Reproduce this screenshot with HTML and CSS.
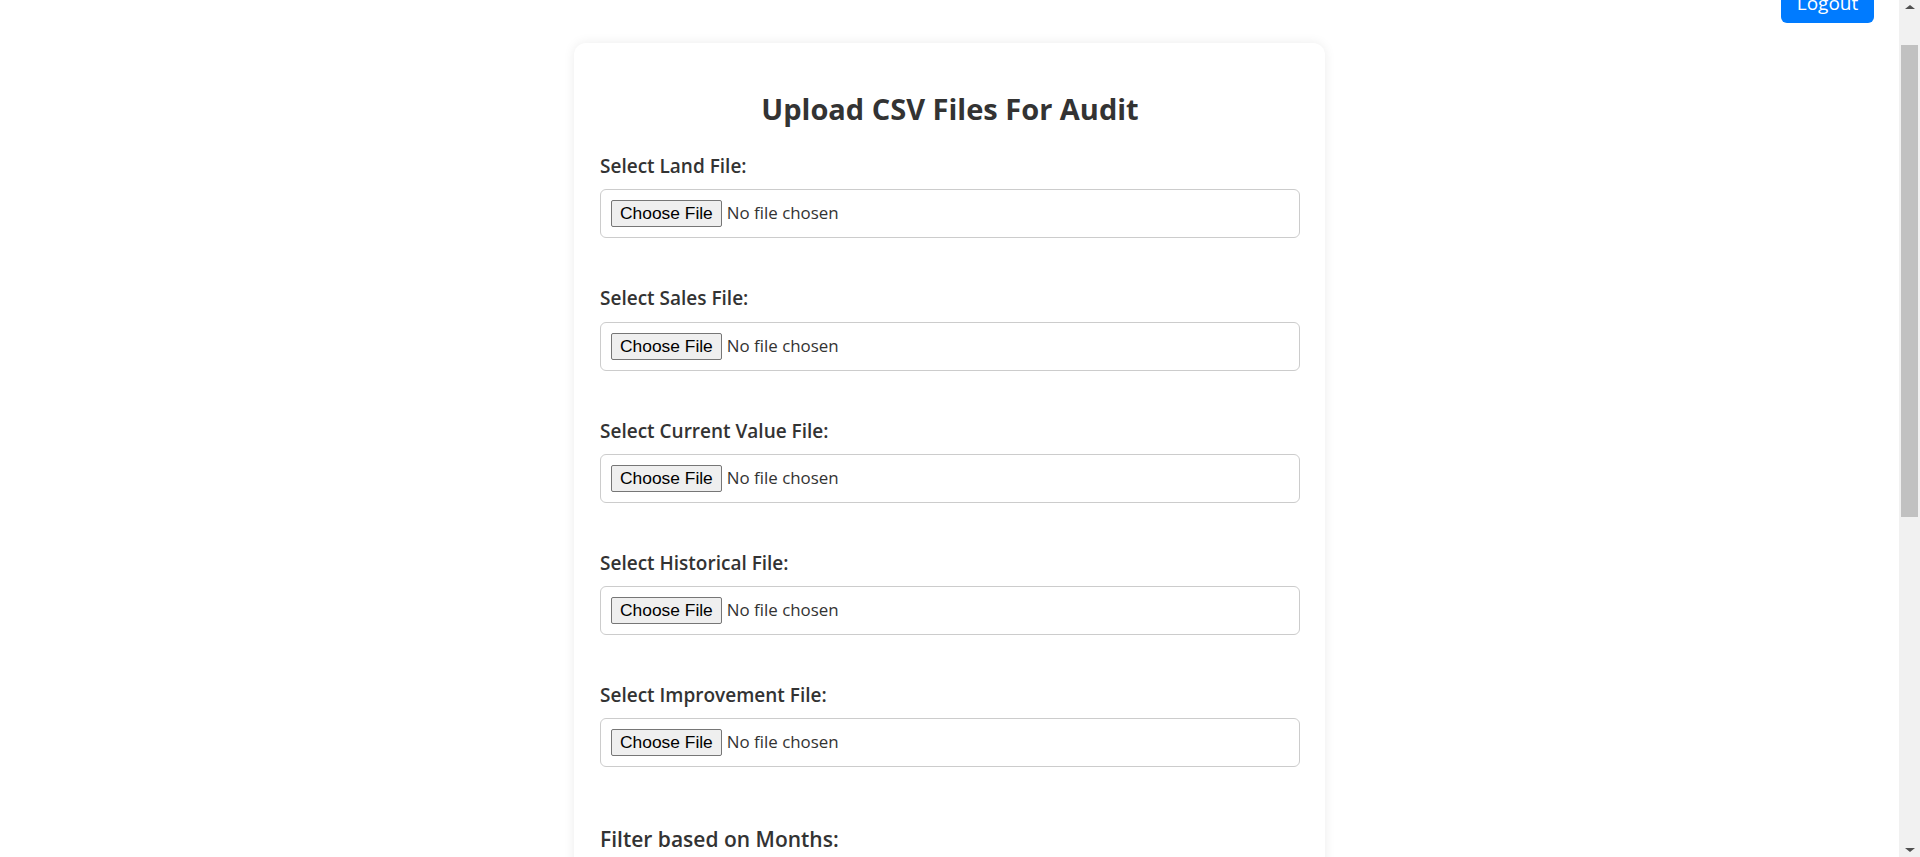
FILE: index.html
```html
<!DOCTYPE html>
<html lang="en">
<head>
<meta charset="utf-8">
<title>Upload CSV Files For Audit</title>
<link rel="stylesheet" href="styles.css">
</head>
<body>
<header class="topbar">
  <button class="logout" type="button">Logout</button>
</header>
<main class="card">
  <h2 class="title">Upload CSV Files For Audit</h2>
  <form class="upload-form">
    <div class="field">
      <label class="field-label" for="land">Select Land File:</label>
      <div class="file-box"><input id="land" class="file-input" type="file" accept=".csv"></div>
    </div>
    <div class="field">
      <label class="field-label" for="sales">Select Sales File:</label>
      <div class="file-box"><input id="sales" class="file-input" type="file" accept=".csv"></div>
    </div>
    <div class="field">
      <label class="field-label" for="current">Select Current Value File:</label>
      <div class="file-box"><input id="current" class="file-input" type="file" accept=".csv"></div>
    </div>
    <div class="field">
      <label class="field-label" for="historical">Select Historical File:</label>
      <div class="file-box"><input id="historical" class="file-input" type="file" accept=".csv"></div>
    </div>
    <div class="field last">
      <label class="field-label" for="improvement">Select Improvement File:</label>
      <div class="file-box"><input id="improvement" class="file-input" type="file" accept=".csv"></div>
    </div>
    <section class="months">
      <h3 class="months-title">Filter based on Months:</h3>
      <div class="field">
        <label class="field-label" for="from">From Month:</label>
        <div class="file-box"><input id="from" class="select" type="month"></div>
      </div>
      <div class="field">
        <label class="field-label" for="to">To Month:</label>
        <div class="file-box"><input id="to" class="select" type="month"></div>
      </div>
      <button class="submit" type="submit">Upload and Audit</button>
    </section>
  </form>
</main>
<div class="scrollbar" aria-hidden="true">
  <span class="sb-arrow sb-up"></span>
  <span class="sb-thumb"></span>
  <span class="sb-arrow sb-down"></span>
</div>
<script src="script.js"></script>
</body>
</html>
```

FILE: styles.css
```css
html, body {
  margin: 0;
  padding: 0;
  background: #ffffff;
}
body {
  font-family: "Open Sans", "Noto Sans", sans-serif;
  color: #333333;
  margin-right: 21px;
}
.topbar {
  display: flex;
  justify-content: flex-end;
  padding: 27px 25px 0 0;
  height: 40px;
}
.logout {
  background: #007bff;
  color: #ffffff;
  border: none;
  border-radius: 6px;
  font-family: "Open Sans", sans-serif;
  font-size: 19px;
  width: 93px;
  height: 40px;
  padding: 0;
}
.card {
  box-sizing: border-box;
  width: 751px;
  margin: 20px auto 60px;
  padding: 27px 25px 40px 26px;
  background: #ffffff;
  border-radius: 12px;
  box-shadow: 0 0 12px rgba(0, 0, 0, 0.08);
}
.title {
  margin: 20.5px 0 27.5px;
  text-align: center;
  font-size: 29px;
  font-weight: 700;
  line-height: 36px;
}
.field {
  display: flex;
  flex-direction: column;
  margin-bottom: 48px;
}
.field.last {
  margin-bottom: 57.5px;
}
.field-label {
  font-size: 19px;
  font-weight: 600;
  line-height: 24px;
  margin-bottom: 11.3px;
}
.file-box {
  border: 1px solid #cccccc;
  border-radius: 6px;
  padding: 10px;
}
.file-input {
  display: block;
  font-family: "Open Sans", sans-serif;
  font-size: 16.9px;
  color: #333333;
  height: 27px;
}
.file-input::file-selector-button {
  font-family: "Liberation Sans", Arial, sans-serif;
  font-size: 17.4px;
  height: 27px;
  padding: 0 8px;
  margin-right: 5px;
  border: 1px solid #767676;
  border-radius: 2px;
  background: #efefef;
  color: #000000;
}
.months-title {
  margin: 0 0 20px;
  font-size: 21px;
  font-weight: 600;
  line-height: 28px;
}
.select {
  box-sizing: border-box;
  font-family: "Open Sans", sans-serif;
  font-size: 17px;
  color: #333333;
  border: none;
  width: 100%;
  height: 27px;
}
.submit {
  display: block;
  width: 100%;
  height: 49px;
  background: #007bff;
  color: #ffffff;
  border: none;
  border-radius: 6px;
  font-family: "Open Sans", sans-serif;
  font-size: 19px;
}
.scrollbar {
  position: fixed;
  top: 0;
  right: 0;
  width: 21px;
  height: 100vh;
  background: #f1f1f1;
}
.sb-thumb {
  position: absolute;
  top: 45px;
  left: 2px;
  right: 2px;
  height: 472px;
  background: #c1c1c1;
}
.sb-arrow {
  position: absolute;
  left: 6px;
  width: 0;
  height: 0;
  border-left: 5px solid transparent;
  border-right: 5px solid transparent;
}
.sb-up {
  top: 5px;
  border-bottom: 4px solid #505050;
}
.sb-down {
  bottom: 5px;
  border-top: 4px solid #505050;
}
```

FILE: script.js
```js
window.scrollTo(0, 44);
```
